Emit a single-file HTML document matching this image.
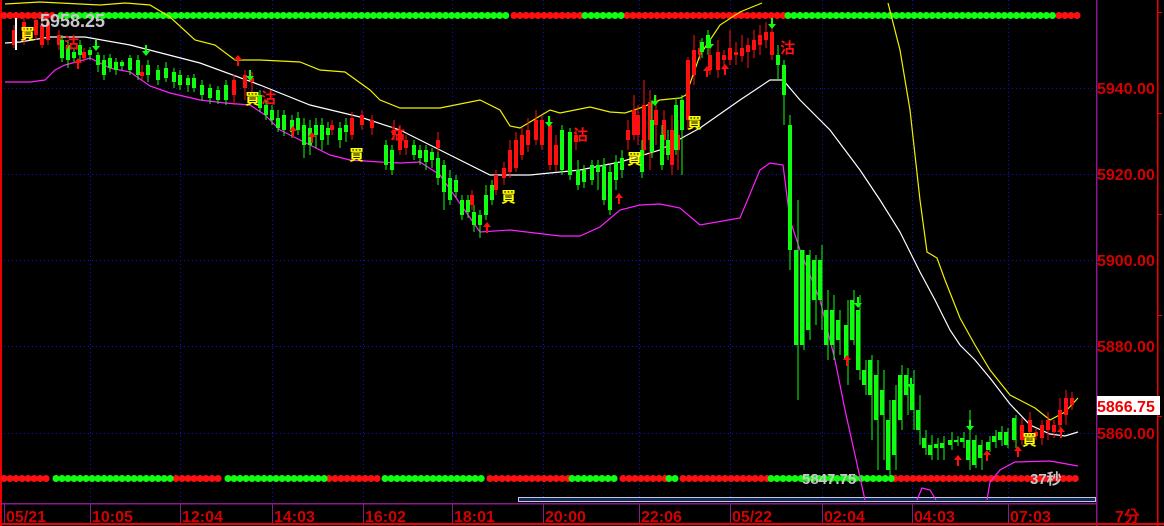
<!DOCTYPE html>
<html><head><meta charset="utf-8"><style>
html,body{margin:0;padding:0;background:#000;width:1164px;height:526px;overflow:hidden}
svg{display:block}
.ax{font-family:"Liberation Sans","Noto Sans CJK TC",sans-serif;font-weight:bold;fill:#d40000;font-size:16px}
.sig{font-family:"Liberation Sans","Noto Sans CJK TC",sans-serif;font-weight:bold;font-size:15px}
</style></head><body>
<svg width="1164" height="526" viewBox="0 0 1164 526" xmlns="http://www.w3.org/2000/svg">
<rect width="1164" height="526" fill="#000"/>
<g stroke="#1010d0" stroke-width="1" stroke-dasharray="1 3">
<path d="M0 88.5H1096M0 174.5H1096M0 260.5H1096M0 346.5H1096M0 433.5H1096"/>
<path d="M90.5 0V503M180.5 0V503M272.5 0V503M363.5 0V503M452.5 0V503M543.5 0V503M639.5 0V503M730.5 0V503M822.5 0V503M912.5 0V503M1008.5 0V503"/>
</g>
<rect x="0" y="0" width="2" height="526" fill="#e00"/>
<rect x="1096" y="0" width="1.5" height="526" fill="#8a1a8a"/>
<rect x="1157" y="0" width="1.5" height="526" fill="#e00"/>
<rect x="0" y="503" width="1096" height="1.5" fill="#8a1a8a"/>
<rect x="0" y="523" width="1164" height="2" fill="#e00"/>
<g fill="#8a1a8a"><rect x="4" y="503" width="1" height="20"/><rect x="90" y="503" width="1" height="20"/><rect x="180" y="503" width="1" height="20"/><rect x="272" y="503" width="1" height="20"/><rect x="363" y="503" width="1" height="20"/><rect x="452" y="503" width="1" height="20"/><rect x="543" y="503" width="1" height="20"/><rect x="639" y="503" width="1" height="20"/><rect x="730" y="503" width="1" height="20"/><rect x="822" y="503" width="1" height="20"/><rect x="912" y="503" width="1" height="20"/><rect x="1008" y="503" width="1" height="20"/></g>
<g fill="#e00"><rect x="1158" y="12" width="4" height="1"/><rect x="1158" y="113" width="4" height="1"/><rect x="1158" y="214" width="4" height="1"/><rect x="1158" y="315" width="4" height="1"/><rect x="1158" y="416" width="4" height="1"/></g>
<rect x="518.5" y="497.5" width="577" height="4" fill="#102a60" stroke="#c8c8d8" stroke-width="1"/>
<g stroke-width="7" stroke-linecap="round" stroke-dasharray="0.01 6">
<path stroke="#ff1010" d="M4 15.5H58M514 15.5H582M627 15.5H785M1059 15.5H1078"/>
<path stroke="#10ff10" d="M61 15.5H511M585 15.5H624M788 15.5H1056"/>
<path stroke="#ff1010" d="M4 478.5H52M176 478.5H224M329 478.5H382M490 478.5H569M623 478.5H666M683 478.5H768M895 478.5H1078"/>
<path stroke="#10ff10" d="M56 478.5H173M228 478.5H326M385 478.5H487M572 478.5H620M669 478.5H680M771 478.5H892"/>
</g>
<g fill="none" stroke-width="1.2">
<polyline stroke="#f0f000" points="5,4 40,2 100,5 125,3 150,5 170,17 195,40 215,45 235,60 260,60 300,62 320,70 345,72 370,90 380,100 400,108 440,108 480,100 500,110 510,126 520,128 550,110 560,113 590,107 610,112 625,113 640,108 660,100 680,98 686,95 700,55 720,25 740,12 762,3"/>
<polyline stroke="#f0f000" points="888,3 900,50 910,110 920,200 927,252 937,258 945,280 960,318 975,345 990,370 1010,395 1035,408 1050,420 1065,412 1078,398"/>
<polyline stroke="#ffffff" points="5,43 20,42 50,37 85,37 130,45 200,63 260,85 310,105 360,117 400,130 450,155 490,175 530,175 580,170 620,162 660,150 700,128 740,100 770,80 783,80 800,100 830,130 860,170 880,200 900,232 920,272 935,300 950,330 960,345 975,360 990,378 1010,404 1030,425 1050,434 1065,436 1078,432"/>
<polyline stroke="#ff20ff" points="5,82 30,82 45,80 55,70 65,65 80,61 90,58 110,68 130,72 150,86 170,93 200,100 225,103 250,105 265,115 280,130 300,140 330,155 350,160 380,162 400,163 420,162 440,175 480,232 510,230 560,236 580,236 600,227 620,210 640,205 660,204 680,208 700,225 740,218 760,170 770,163 783,165 790,220 800,250 820,300 835,360 845,410 855,455 865,500"/>
<polyline stroke="#ff20ff" points="917,500 922,488 930,490 936,500"/>
<polyline stroke="#ff20ff" points="987,500 990,482 1000,470 1015,462 1050,461 1078,466"/>
</g>
<g fill="#ff1010">
<path stroke="#ff1010" stroke-width="1" d="M14 25V48M24 18V45M36 15V40M42 18V48M48 15V45M59 30V50M84 48V62M142 65V80M234 75V105M245 70V100M252 72V92M332 120V135M352 112V140M362 110V130M372 115V135M394 120V140M400 125V155M406 135V155M438 132V155M472 190V210M496 170V195M504 162V185M510 140V178M516 132V172M522 128V160M528 118V152M536 110V145M542 115V150M550 118V170M556 135V172M562 130V170M576 128V150M628 120V150M634 95V140M638 105V145M644 80V155M650 90V170M656 95V145M664 110V155M672 115V175M678 120V170M688 57V130M694 35V85M700 40V60M710 48V75M718 40V78M724 50V70M730 30V65M736 42V65M742 35V62M748 38V68M754 30V58M760 25V55M766 22V48M772 15V60M1014 425V442M1022 418V445M1030 412V440M1036 428V440M1042 420V445M1048 412V440M1054 420V438M1060 398V432M1066 390V425M1072 392V410"/>
<rect x="12" y="30" width="4" height="15"/><rect x="22" y="22" width="4" height="18"/><rect x="34" y="20" width="4" height="15"/><rect x="40" y="25" width="4" height="20"/><rect x="46" y="22" width="4" height="18"/><rect x="57" y="35" width="4" height="10"/><rect x="82" y="52" width="4" height="6"/><rect x="140" y="72" width="4" height="4"/><rect x="232" y="80" width="4" height="15"/><rect x="243" y="75" width="4" height="13"/><rect x="250" y="78" width="4" height="4"/><rect x="330" y="125" width="4" height="5"/><rect x="350" y="118" width="4" height="17"/><rect x="360" y="115" width="4" height="10"/><rect x="370" y="120" width="4" height="8"/><rect x="392" y="130" width="4" height="5"/><rect x="398" y="130" width="4" height="20"/><rect x="404" y="140" width="4" height="8"/><rect x="436" y="140" width="4" height="8"/><rect x="470" y="195" width="4" height="10"/><rect x="494" y="175" width="4" height="15"/><rect x="502" y="168" width="4" height="10"/><rect x="508" y="150" width="4" height="22"/><rect x="514" y="140" width="4" height="28"/><rect x="520" y="135" width="4" height="20"/><rect x="526" y="130" width="4" height="15"/><rect x="534" y="120" width="4" height="20"/><rect x="540" y="120" width="4" height="25"/><rect x="548" y="125" width="4" height="40"/><rect x="554" y="145" width="4" height="20"/><rect x="560" y="140" width="4" height="20"/><rect x="574" y="135" width="4" height="7"/><rect x="626" y="130" width="4" height="10"/><rect x="632" y="110" width="4" height="25"/><rect x="636" y="115" width="4" height="20"/><rect x="642" y="105" width="4" height="45"/><rect x="648" y="102" width="4" height="38"/><rect x="654" y="110" width="4" height="15"/><rect x="662" y="120" width="4" height="20"/><rect x="670" y="130" width="4" height="35"/><rect x="676" y="135" width="4" height="15"/><rect x="686" y="60" width="4" height="60"/><rect x="692" y="50" width="4" height="25"/><rect x="698" y="48" width="4" height="7"/><rect x="708" y="55" width="4" height="15"/><rect x="716" y="52" width="4" height="18"/><rect x="722" y="55" width="4" height="5"/><rect x="728" y="48" width="4" height="12"/><rect x="734" y="52" width="4" height="3"/><rect x="740" y="48" width="4" height="8"/><rect x="746" y="45" width="4" height="7"/><rect x="752" y="40" width="4" height="10"/><rect x="758" y="35" width="4" height="10"/><rect x="764" y="32" width="4" height="8"/><rect x="770" y="32" width="4" height="23"/><rect x="1012" y="430" width="4" height="8"/><rect x="1020" y="425" width="4" height="15"/><rect x="1028" y="420" width="4" height="12"/><rect x="1034" y="432" width="4" height="4"/><rect x="1040" y="425" width="4" height="13"/><rect x="1046" y="420" width="4" height="10"/><rect x="1052" y="425" width="4" height="7"/><rect x="1058" y="410" width="4" height="15"/><rect x="1064" y="398" width="4" height="17"/><rect x="1070" y="398" width="4" height="7"/>
</g>
<g fill="#10ff10">
<path stroke="#10ff10" stroke-width="1" d="M62 35V62M68 40V68M74 48V62M80 40V62M90 47V60M98 52V72M104 55V80M110 54V72M116 58V75M122 60V70M130 55V75M138 55V80M148 60V82M158 65V85M166 62V82M174 68V88M180 70V90M188 75V92M194 74V92M202 80V100M210 84V104M218 86V104M226 80V105M260 90V112M266 100V120M272 105V125M278 110V132M284 110V136M292 115V138M298 112V135M304 118V158M310 120V155M316 118V148M322 118V150M328 122V145M340 122V148M346 118V142M386 140V170M392 145V175M414 140V160M420 145V165M426 145V170M432 148V168M438 152V185M444 160V210M450 170V205M456 175V198M462 195V220M468 195V218M474 205V232M480 210V238M486 185V220M492 180V205M562 125V175M570 128V180M578 160V190M584 165V188M592 160V185M598 160V190M604 158V205M610 165V215M616 155V190M622 150V178M642 140V178M652 100V158M662 125V170M668 130V160M676 98V155M682 95V175M702 38V58M708 30V55M778 45V80M784 60V125M790 115V270M798 200V400M804 250V350M810 250V340M816 255V325M822 245V330M828 290V360M834 295V360M840 310V355M848 300V385M854 290V345M860 295V380M866 360V395M872 355V440M878 360V470M884 370V460M890 400V480M896 385V470M902 365V430M908 368V415M914 370V430M920 395V445M926 430V455M932 435V460M938 438V460M944 436V460M952 432V450M958 436V446M964 432V448M970 410V470M976 435V468M982 440V470M990 436V452M996 430V448M1002 426V446M1008 428V448M1016 415V448"/>
<rect x="60" y="40" width="4" height="18"/><rect x="66" y="45" width="4" height="15"/><rect x="72" y="52" width="4" height="6"/><rect x="78" y="45" width="4" height="10"/><rect x="88" y="50" width="4" height="5"/><rect x="96" y="55" width="4" height="10"/><rect x="102" y="60" width="4" height="15"/><rect x="108" y="58" width="4" height="10"/><rect x="114" y="62" width="4" height="8"/><rect x="120" y="62" width="4" height="4"/><rect x="128" y="58" width="4" height="12"/><rect x="136" y="60" width="4" height="15"/><rect x="146" y="65" width="4" height="10"/><rect x="156" y="70" width="4" height="10"/><rect x="164" y="68" width="4" height="10"/><rect x="172" y="72" width="4" height="10"/><rect x="178" y="75" width="4" height="10"/><rect x="186" y="78" width="4" height="7"/><rect x="192" y="78" width="4" height="10"/><rect x="200" y="85" width="4" height="10"/><rect x="208" y="88" width="4" height="10"/><rect x="216" y="90" width="4" height="10"/><rect x="224" y="85" width="4" height="15"/><rect x="258" y="95" width="4" height="13"/><rect x="264" y="105" width="4" height="10"/><rect x="270" y="110" width="4" height="10"/><rect x="276" y="118" width="4" height="10"/><rect x="282" y="115" width="4" height="15"/><rect x="290" y="120" width="4" height="12"/><rect x="296" y="118" width="4" height="12"/><rect x="302" y="125" width="4" height="20"/><rect x="308" y="128" width="4" height="17"/><rect x="314" y="125" width="4" height="10"/><rect x="320" y="125" width="4" height="15"/><rect x="326" y="128" width="4" height="7"/><rect x="338" y="128" width="4" height="12"/><rect x="344" y="125" width="4" height="7"/><rect x="384" y="145" width="4" height="20"/><rect x="390" y="150" width="4" height="20"/><rect x="412" y="145" width="4" height="10"/><rect x="418" y="150" width="4" height="8"/><rect x="424" y="150" width="4" height="12"/><rect x="430" y="152" width="4" height="8"/><rect x="436" y="158" width="4" height="20"/><rect x="442" y="165" width="4" height="27"/><rect x="448" y="178" width="4" height="22"/><rect x="454" y="180" width="4" height="12"/><rect x="460" y="200" width="4" height="15"/><rect x="466" y="200" width="4" height="12"/><rect x="472" y="212" width="4" height="13"/><rect x="478" y="215" width="4" height="10"/><rect x="484" y="195" width="4" height="20"/><rect x="490" y="185" width="4" height="15"/><rect x="560" y="130" width="4" height="40"/><rect x="568" y="132" width="4" height="43"/><rect x="576" y="170" width="4" height="15"/><rect x="582" y="170" width="4" height="12"/><rect x="590" y="165" width="4" height="15"/><rect x="596" y="165" width="4" height="7"/><rect x="602" y="165" width="4" height="35"/><rect x="608" y="172" width="4" height="38"/><rect x="614" y="162" width="4" height="18"/><rect x="620" y="158" width="4" height="12"/><rect x="640" y="150" width="4" height="22"/><rect x="650" y="120" width="4" height="32"/><rect x="660" y="135" width="4" height="30"/><rect x="666" y="140" width="4" height="15"/><rect x="674" y="105" width="4" height="45"/><rect x="680" y="100" width="4" height="30"/><rect x="700" y="42" width="4" height="10"/><rect x="706" y="35" width="4" height="13"/><rect x="776" y="55" width="4" height="10"/><rect x="782" y="65" width="4" height="30"/><rect x="788" y="125" width="4" height="125"/><rect x="794" y="250" width="4" height="95"/><rect x="800" y="250" width="4" height="95"/><rect x="806" y="255" width="4" height="75"/><rect x="812" y="260" width="4" height="40"/><rect x="818" y="260" width="4" height="40"/><rect x="824" y="310" width="4" height="35"/><rect x="830" y="310" width="4" height="35"/><rect x="836" y="320" width="4" height="20"/><rect x="844" y="325" width="4" height="35"/><rect x="850" y="300" width="4" height="40"/><rect x="856" y="310" width="4" height="60"/><rect x="862" y="370" width="4" height="15"/><rect x="868" y="360" width="4" height="35"/><rect x="874" y="375" width="4" height="45"/><rect x="880" y="390" width="4" height="25"/><rect x="886" y="420" width="4" height="50"/><rect x="892" y="400" width="4" height="55"/><rect x="898" y="375" width="4" height="45"/><rect x="904" y="375" width="4" height="20"/><rect x="910" y="385" width="4" height="25"/><rect x="916" y="410" width="4" height="20"/><rect x="922" y="438" width="4" height="10"/><rect x="928" y="445" width="4" height="10"/><rect x="934" y="444" width="4" height="4"/><rect x="940" y="443" width="4" height="5"/><rect x="948" y="440" width="4" height="5"/><rect x="954" y="440" width="4" height="2"/><rect x="960" y="438" width="4" height="4"/><rect x="966" y="440" width="4" height="20"/><rect x="972" y="440" width="4" height="25"/><rect x="978" y="445" width="4" height="13"/><rect x="986" y="442" width="4" height="8"/><rect x="992" y="436" width="4" height="6"/><rect x="998" y="432" width="4" height="8"/><rect x="1004" y="432" width="4" height="13"/><rect x="1012" y="418" width="4" height="22"/>
</g>
<rect x="15" y="18" width="2" height="32" fill="#fff"/>
<g fill="#ff1010">
<path d="M78 58l-4 5h3v6h2v-6h3z M238 55l-4 5h3v6h2v-6h3z M293 126l-4 5h3v6h2v-6h3z M312 132l-4 5h3v6h2v-6h3z M487 222l-4 5h3v6h2v-6h3z M619 193l-4 5h3v6h2v-6h3z M707 66l-4 5h3v6h2v-6h3z M725 64l-4 5h3v6h2v-6h3z M847 355l-4 5h3v6h2v-6h3z M958 455l-4 5h3v6h2v-6h3z M987 450l-4 5h3v6h2v-6h3z M1018 446l-4 5h3v6h2v-6h3z M1061 427l-4 5h3v6h2v-6h3z"/>
</g>
<g fill="#10ff10">
<path d="M95 40h2v6h3l-4 5-4-5h3z M249 70h2v6h3l-4 5-4-5h3z M548 116h2v6h3l-4 5-4-5h3z M654 95h2v6h3l-4 5-4-5h3z M709 38h2v6h3l-4 5-4-5h3z M771 18h2v6h3l-4 5-4-5h3z M857 297h2v6h3l-4 5-4-5h3z M910 378h2v6h3l-4 5-4-5h3z M969 420h2v6h3l-4 5-4-5h3z M145 45h2v6h3l-4 5-4-5h3z"/>
</g>
<g class="sig">
<text x="20" y="39" fill="#ffff00">買</text>
<text x="245" y="104" fill="#ffff00">買</text>
<text x="349" y="160" fill="#ffff00">買</text>
<text x="501" y="202" fill="#ffff00">買</text>
<text x="627" y="164" fill="#ffff00">買</text>
<text x="687" y="128" fill="#ffff00">買</text>
<text x="1022" y="445" fill="#ffff00">買</text>
<text x="64" y="48" fill="#ff1010">沽</text>
<text x="261" y="103" fill="#ff1010">沽</text>
<text x="390" y="139" fill="#ff1010">沽</text>
<text x="573" y="140" fill="#ff1010">沽</text>
<text x="780" y="53" fill="#ff1010">沽</text>
</g>
<text x="40" y="27" font-family="Liberation Sans,sans-serif" font-size="18" font-weight="bold" fill="#c8c8c8">5958.25</text>
<text x="802" y="484" font-family="Liberation Sans,sans-serif" font-size="15" font-weight="bold" fill="#c8c8c8">5847.75</text>
<text x="1030" y="484" font-family="Liberation Sans,&quot;Noto Sans CJK TC&quot;,sans-serif" font-size="15" font-weight="bold" fill="#c8c8c8">37秒</text>
<g class="ax">
<text x="1097" y="94">5940.00</text>
<text x="1097" y="180">5920.00</text>
<text x="1097" y="266">5900.00</text>
<text x="1097" y="352">5880.00</text>
<text x="1097" y="439">5860.00</text>
</g>
<rect x="1097" y="396" width="63" height="19" fill="#fff"/>
<text x="1097" y="412" class="ax" style="fill:#e00">5866.75</text>
<g class="ax">
<text x="6" y="522">05/21</text>
<text x="92" y="522">10:05</text>
<text x="182" y="522">12:04</text>
<text x="274" y="522">14:03</text>
<text x="365" y="522">16:02</text>
<text x="454" y="522">18:01</text>
<text x="545" y="522">20:00</text>
<text x="641" y="522">22:06</text>
<text x="732" y="522">05/22</text>
<text x="824" y="522">02:04</text>
<text x="914" y="522">04:03</text>
<text x="1010" y="522">07:03</text>
<text x="1115" y="522">7分</text>
</g>
</svg>
</body></html>
